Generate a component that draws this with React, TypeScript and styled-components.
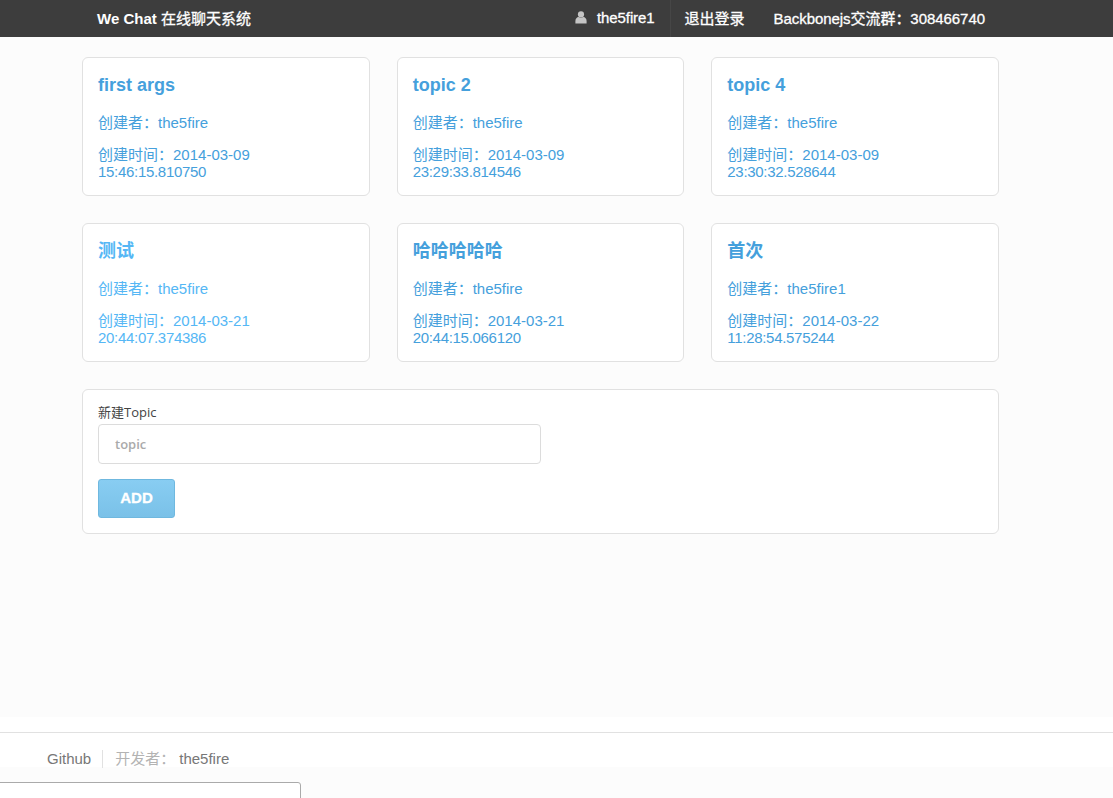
import React from "react";
import styled, { createGlobalStyle } from "styled-components";

const Global = createGlobalStyle`
  html, body { margin: 0; padding: 0; height: 100%; overflow: hidden; }
  body {
    background: #fcfcfc;
    font-family: "Liberation Sans", "Noto Sans CJK SC", sans-serif;
    color: #333;
  }
`;

const Page = styled.div`
  width: 1113px;
  height: 798px;
  display: flex;
  flex-direction: column;
  overflow: hidden;
`;

const TopBar = styled.header`
  height: 37px;
  flex: none;
  box-sizing: border-box;
  background: #3d3d3d;
  color: #fff;
  display: flex;
  align-items: center;
  padding: 0 128px 2px 97px;
  font-size: 15px;
  -webkit-text-stroke: 0.3px currentColor;
`;

const Brand = styled.div`
  flex: 1;
  b { font-weight: 700; -webkit-text-stroke: 0; }
`;

const UserItem = styled.div`
  display: flex;
  align-items: center;
  gap: 10px;
  height: 37px;
  margin-bottom: -2px;
  padding: 0 15px 2px 0;
  box-sizing: border-box;
  border-right: 1px solid #464646;
  letter-spacing: -0.1px;
`;

const NavItem = styled.div<{ $gap: number }>`
  margin-left: ${(p) => p.$gap}px;
  letter-spacing: ${(p) => (p.$gap > 20 ? "-0.05px" : "0")};
`;

const Main = styled.main`
  flex: none;
  height: 680px;
  box-sizing: border-box;
  padding: 20px 114px 0 82px;
`;

const Grid = styled.div`
  display: grid;
  grid-template-columns: repeat(3, 1fr);
  gap: 27px;
`;

const Panel = styled.div`
  background: #fff;
  border: 1px solid #e1e1e1;
  border-radius: 6px;
  box-sizing: border-box;
`;

const Card = styled(Panel)<{ $color: string }>`
  height: 139px;
  padding: 16px 15px 0;
  color: ${(p) => p.$color};
  font-size: 15px;
  line-height: 17px;
`;

const CardTitle = styled.h3`
  margin: 0 0 18px;
  font-size: 18px;
  line-height: 22px;
  font-weight: 700;
`;

const CardLine = styled.p`
  margin: 0 0 15px;
`;

const TimeStamp = styled.span`
  display: block;
  letter-spacing: -0.3px;
`;

const FormPanel = styled(Panel)`
  height: 145px;
  margin-top: 27px;
  padding: 14px 15px 0;
`;

const Label = styled.label`
  display: block;
  font-family: "Open Sans", "Noto Sans CJK SC", sans-serif;
  font-size: 13px;
  line-height: 16px;
  color: #444;
  margin-bottom: 4px;
`;

const Input = styled.input`
  display: block;
  width: 443px;
  height: 40px;
  box-sizing: border-box;
  border: 1px solid #dcdcdc;
  border-radius: 4px;
  background: #fff;
  padding: 0 16px;
  font-family: "Open Sans", sans-serif;
  font-size: 13px;
  font-weight: 600;
  outline: none;
  &::placeholder { color: #aaa; opacity: 1; }
`;

const AddButton = styled.button`
  display: block;
  margin-top: 15px;
  width: 77px;
  height: 39px;
  border: 1px solid #6fb8df;
  border-radius: 3px;
  background: linear-gradient(#88cdf2, #7ac1e8);
  color: #fff;
  font-family: "Liberation Sans", sans-serif;
  font-size: 15px;
  font-weight: 700;
  padding: 0 0 2px;
  -webkit-text-stroke: 0.3px #fff;
`;

const Footer = styled.footer`
  flex: none;
  height: 50px;
  background: #fff;
  box-sizing: border-box;
  padding-top: 15px;
`;

const FooterInner = styled.div`
  border-top: 1px solid #e1e1e1;
  height: 35px;
  box-sizing: border-box;
  padding: 17px 0 0 47px;
  display: flex;
  align-items: flex-start;
  font-size: 15px;
  line-height: 18px;
  color: #777;
`;

const FooterLink = styled.span`
  padding-right: 11px;
  border-right: 1px solid #e1e1e1;
  margin-right: 12px;
`;

const FooterMuted = styled.span`
  color: #b3b3b3;
  margin-right: 4px;
`;

const StubBox = styled.div`
  position: fixed;
  left: -10px;
  top: 782px;
  width: 309px;
  height: 40px;
  border: 1px solid #aaa;
  border-radius: 3px;
  background: #fff;
`;

const UserIcon = () => (
  <svg width="12" height="13" viewBox="0 0 12 13" aria-hidden="true">
    <circle cx="6" cy="3.4" r="3.1" fill="#c4c4c4" />
    <path d="M0.4 12.6V10c0-2.4 1.6-3.7 3.2-3.9 1.3 1 3.5 1 4.8 0 1.6.2 3.2 1.5 3.2 3.9v2.6z" fill="#c4c4c4" />
  </svg>
);

const topics = [
  { title: "first args", by: "the5fire", date: "2014-03-09", time: "15:46:15.810750", color: "#45a0dc" },
  { title: "topic 2", by: "the5fire", date: "2014-03-09", time: "23:29:33.814546", color: "#45a0dc" },
  { title: "topic 4", by: "the5fire", date: "2014-03-09", time: "23:30:32.528644", color: "#45a0dc" },
  { title: "测试", by: "the5fire", date: "2014-03-21", time: "20:44:07.374386", color: "#55b7f5" },
  { title: "哈哈哈哈哈", by: "the5fire", date: "2014-03-21", time: "20:44:15.066120", color: "#45a0dc" },
  { title: "首次", by: "the5fire1", date: "2014-03-22", time: "11:28:54.575244", color: "#45a0dc" },
];

export default function App() {
  return (
    <Page>
      <Global />
      <TopBar>
        <Brand>
          <b>We Chat</b> 在线聊天系统
        </Brand>
        <UserItem>
          <UserIcon />
          the5fire1
        </UserItem>
        <NavItem $gap={14}>退出登录</NavItem>
        <NavItem $gap={29}>Backbonejs交流群：308466740</NavItem>
      </TopBar>
      <Main>
        <Grid>
          {topics.map((t) => (
            <Card key={t.time} $color={t.color}>
              <CardTitle>{t.title}</CardTitle>
              <CardLine>创建者：{t.by}</CardLine>
              <CardLine>
                创建时间：{t.date}
                <TimeStamp>{t.time}</TimeStamp>
              </CardLine>
            </Card>
          ))}
        </Grid>
        <FormPanel>
          <Label>新建Topic</Label>
          <Input placeholder="topic" />
          <AddButton>ADD</AddButton>
        </FormPanel>
      </Main>
      <Footer>
        <FooterInner>
          <FooterLink>Github</FooterLink>
          <FooterMuted>开发者：</FooterMuted>
          <span>the5fire</span>
        </FooterInner>
      </Footer>
      <StubBox />
    </Page>
  );
}
